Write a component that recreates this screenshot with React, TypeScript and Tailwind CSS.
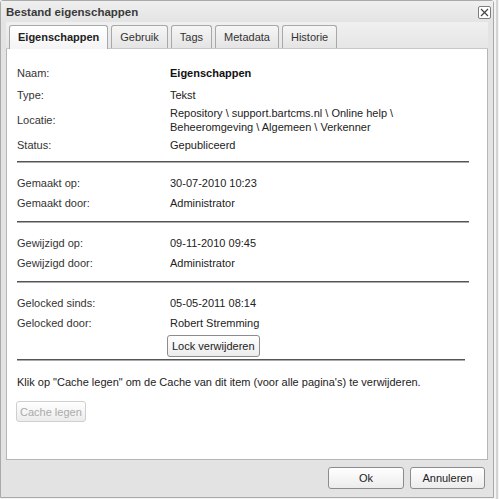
import React from 'react';

const tabs = ['Eigenschappen', 'Gebruik', 'Tags', 'Metadata', 'Historie'];

const Row: React.FC<{ label: string; children: React.ReactNode; className?: string }> = ({ label, children, className }) => (
  <div className={`flex leading-[14px] ${className || 'py-[2px]'}`}>
    <div className="w-[153px] shrink-0 text-[#333]">{label}</div>
    <div className="text-[#222]">{children}</div>
  </div>
);

const Rule = ({ className }: { className?: string }) => (
  <div className={`h-[2px] border-t border-[#555] border-b border-b-[#aaa] ${className || 'w-[452px]'}`} />
);

const Button: React.FC<{ children: React.ReactNode; className?: string; disabled?: boolean }> = ({ children, className, disabled }) => (
  <button
    className={`rounded-[3px] border bg-gradient-to-b from-white to-[#ececec] leading-[14px] ${
      disabled ? 'border-[#cfcfcf] text-[#aaa]' : 'border-[#8c8c8c] text-[#222]'
    } ${className || ''}`}
  >
    {children}
  </button>
);

export default function App() {
  return (
    <div
      className="flex w-[499px] h-[499px] overflow-hidden bg-[#f3f3f3] text-[11px]"
      style={{ fontFamily: '"Liberation Sans", Arial, sans-serif' }}
    >
      <div className="flex flex-col w-[494px] h-[498px] shrink-0 bg-[#e3e3e3] border border-[#a9a9a9] rounded-t-[3px]">
        {/* title */}
        <div className="flex items-center justify-between h-[21px] pl-[5px] pr-[2px] bg-gradient-to-b from-[#efefef] to-[#e4e4e4]">
          <span className="font-bold text-[11.5px] text-[#3a3a3a] pt-[2px]">Bestand eigenschappen</span>
          <div className="flex items-center justify-center w-[13px] h-[13px] mt-[2px] border border-[#7d7d7d] rounded-[2px] bg-white">
            <svg width="9" height="9" viewBox="0 0 9 9">
              <path d="M1 1L8 8M8 1L1 8" stroke="#444" strokeWidth="1.2" />
            </svg>
          </div>
        </div>

        <div className="flex flex-col flex-1 px-[5px]">
          {/* tab strip */}
          <div className="flex items-end gap-[3px] h-[27px] pl-[3px] bg-gradient-to-b from-[#f0f0f0] to-[#e6e6e6] border-b border-[#c7c7c7]">
            {tabs.map((t, i) => (
              <div
                key={t}
                className={`px-[8px] flex items-center rounded-t-[3px] border border-b-0 border-[#a8a8a8] ${
                  i === 0
                    ? 'bg-gradient-to-b from-white to-[#f4f4f4] font-bold text-[#222] h-[24px] mb-[-1px]'
                    : 'h-[23px] bg-gradient-to-b from-[#f6f6f6] to-[#e4e4e4] text-[#333]'
                }`}
              >
                {t}
              </div>
            ))}
          </div>

          {/* panel */}
          <div className="flex-1 bg-white border border-t-0 border-[#b5b5b5] px-[10px] pt-[15px]">
            <Row label="Naam:" className="pt-[2px] pb-[6px]">
              <span className="font-bold text-[#111]">Eigenschappen</span>
            </Row>
            <Row label="Type:">Tekst</Row>
            <Row label="Locatie:" className="py-[2px] items-center">
              Repository \ support.bartcms.nl \ Online help \<br />
              Beheeromgeving \ Algemeen \ Verkenner
            </Row>
            <Row label="Status:">Gepubliceerd</Row>
            <Rule className="w-[452px] mt-[7px]" />

            <div className="mt-[10px]">
              <Row label="Gemaakt op:" className="py-[3px]">30-07-2010 10:23</Row>
              <Row label="Gemaakt door:" className="py-[3px]">Administrator</Row>
            </div>
            <Rule className="w-[452px] mt-[8px]" />

            <div className="mt-[10px]">
              <Row label="Gewijzigd op:" className="py-[3px]">09-11-2010 09:45</Row>
              <Row label="Gewijzigd door:" className="py-[3px]">Administrator</Row>
            </div>
            <Rule className="w-[452px] mt-[8px]" />

            <div className="mt-[10px]">
              <Row label="Gelocked sinds:" className="py-[3px]">05-05-2011 08:14</Row>
              <Row label="Gelocked door:" className="py-[3px]">Robert Stremming</Row>
            </div>
            <Button className="ml-[150px] mt-[2px] h-[22px] px-[4px]">Lock verwijderen</Button>
            <Rule className="w-[448px] mt-[2px]" />

            <p className="mt-[14px] leading-[14px] text-[#222]">
              Klik op "Cache legen" om de Cache van dit item (voor alle pagina's) te verwijderen.
            </p>
            <Button disabled className="mt-[12px] ml-[-1px] h-[21px] px-[3px]">Cache legen</Button>
          </div>

          {/* footer */}
          <div className="flex justify-end gap-[6px] h-[37px] pt-[7px] pr-[3px]">
            <Button className="w-[76px] h-[22px]">Ok</Button>
            <Button className="w-[75px] h-[22px]">Annuleren</Button>
          </div>
        </div>
      </div>
      <div className="flex-1 flex">
        <div className="w-[2px]" />
        <div className="w-[2px] bg-[#d4d4d4]" />
      </div>
    </div>
  );
}
